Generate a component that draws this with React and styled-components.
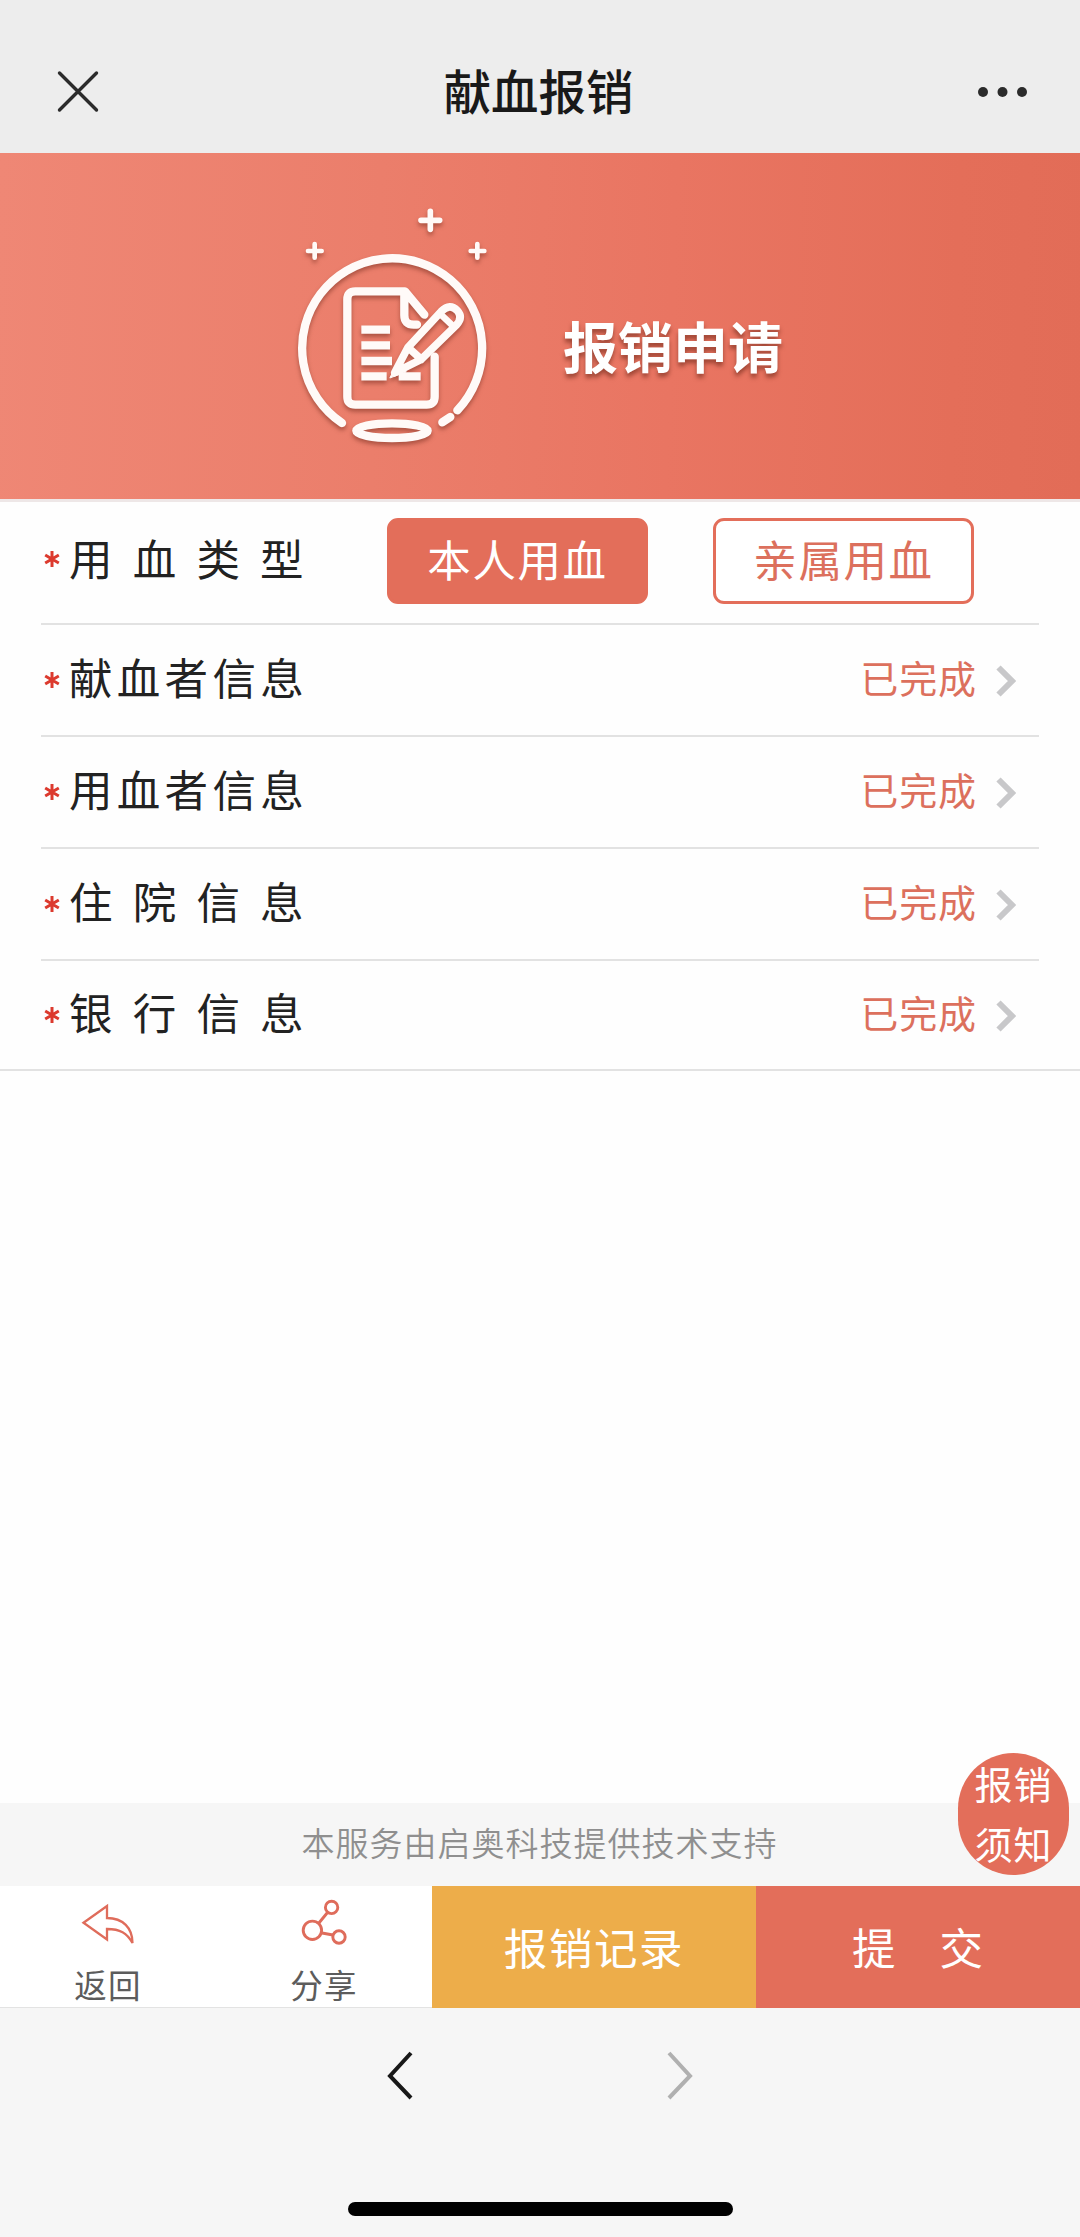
import React from 'react';
import styled, { createGlobalStyle } from 'styled-components';

const GlobalStyle = createGlobalStyle`
  * {
    box-sizing: border-box;
  }

  body {
    margin: 0;
    background: #fff;
    font-family: 'Noto Sans CJK SC', sans-serif;
    color: #222;
  }

  button {
    padding: 0;
    border: 0;
    background: none;
    font-family: inherit;
    white-space: nowrap;
  }
`;

const Page = styled.div`
  display: flex;
  flex-direction: column;
  width: 1080px;
  height: 2237px;
  background: #fefefe;
`;

const TitleBar = styled.header`
  display: flex;
  align-items: flex-end;
  justify-content: space-between;
  height: 153px;
  padding: 0 52px 36px;
  background: #ededed;
`;

const Title = styled.h1`
  margin: 0 3px 2px 0;
  font-size: 47.4px;
  font-weight: 500;
  line-height: 50px;
  color: #191919;
`;

const BarIcon = styled.svg`
  display: block;
  width: 52px;
  height: 50px;
`;

const Banner = styled.section`
  display: flex;
  align-items: flex-start;
  height: 349px;
  padding: 37px 0 0 270px;
  border-bottom: 3px solid #eee7e7;
  background: linear-gradient(92deg, #ef8775 0%, #eb7e6b 35%, #e97562 62%, #e46e59 88%, #e26c57 100%);
`;

const BannerIcon = styled.svg`
  width: 250px;
  height: 270px;
  filter: drop-shadow(0 3px 2px rgba(110, 40, 25, 0.5));
`;

const BannerText = styled.div`
  margin: 118px 0 0 43px;
  font-size: 55px;
  font-weight: 700;
  line-height: 72px;
  color: #fff;
  text-shadow: 0 4px 4px rgba(110, 40, 25, 0.6);
`;

const Form = styled.main`
  flex: 1;
`;

const List = styled.div`
  padding: 0 41px;
  border-bottom: 2px solid #e2e2e2;
`;

const Row = styled.div`
  display: flex;
  align-items: center;
  height: ${({ $height }) => $height || '112px'};
  padding-bottom: ${({ $lift }) => $lift || '1px'};
  border-bottom: 2px solid #e2e2e2;

  &:last-child {
    height: 108px;
    border-bottom: 0;
  }
`;

const Star = styled.svg`
  flex: none;
  width: 16px;
  height: 18px;
  margin: ${({ $top }) => $top || '1px'} 9px 0 3px;
`;

const Label = styled.div`
  width: 318px;
  margin-bottom: 6px;
  font-size: 43.5px;
  line-height: 60px;
  letter-spacing: ${({ $wide }) => ($wide ? '20.2px' : '4.3px')};
  white-space: nowrap;
`;

const Choice = styled.button`
  width: 261px;
  height: 86px;
  margin-right: 65px;
  padding-bottom: 5px;
  border: 3px solid #e36e5a;
  border-radius: 11px;
  background: ${({ $active }) => ($active ? '#e36e5a' : '#fff')};
  color: ${({ $active }) => ($active ? '#fff' : '#dc705d')};
  font-size: 43.5px;
  font-weight: 400;
  line-height: 75px;
  letter-spacing: 1.6px;
`;

const Status = styled.span`
  margin: 0 0 5px auto;
  font-size: 38px;
  font-weight: 400;
  line-height: 54px;
  letter-spacing: 0.9px;
  color: #dc705d;
`;

const Arrow = styled.svg`
  width: 20px;
  height: 32px;
  margin: 3px 23px 0 19px;
`;

const Support = styled.div`
  display: flex;
  align-items: center;
  justify-content: center;
  position: relative;
  height: 83px;
  padding: 0 1px 5px 0;
  background: #f6f6f6;
  font-size: 33px;
  font-weight: 350;
  letter-spacing: 1px;
  color: #8f8f8f;
`;

// Floating entry to the notice, hangs over the support line
const NoticeBadge = styled.button`
  position: absolute;
  right: 11px;
  bottom: 11px;
  width: 111px;
  height: 122px;
  padding-bottom: 5px;
  border-radius: 56px;
  background: #e36e5a;
  color: #fff;
  font-size: 38px;
  font-weight: 400;
  line-height: 60px;
  letter-spacing: 1px;
`;

const Toolbar = styled.footer`
  display: grid;
  grid-template-columns: 216px 216px 324px 324px;
  height: 122px;
`;

const Tool = styled.button`
  display: flex;
  flex-direction: column;
  align-items: center;
  padding-top: 12px;
  border-bottom: 2px solid #e3e3e3;
  background: #fff;
  font-size: 32.5px;
  font-weight: 400;
  line-height: 46px;
  letter-spacing: 1.2px;
  color: #5c5c5c;
`;

const ToolIcon = styled.svg`
  width: 56px;
  height: 50px;
  margin-bottom: 13px;
`;

const Action = styled.button`
  padding-bottom: 2px;
  background: ${({ $color }) => $color};
  color: #fff;
  font-size: 43.5px;
  font-weight: 400;
  letter-spacing: 1.6px;
`;

const SpacedAction = styled(Action)`
  letter-spacing: 44px;
  text-indent: 43px;
`;

const BrowserNav = styled.nav`
  display: flex;
  flex-direction: column;
  align-items: center;
  justify-content: space-between;
  height: 229px;
  padding: 42px 0 21px;
  background: #f6f6f6;
`;

const NavButtons = styled.div`
  display: flex;
  justify-content: space-between;
  width: 306px;
`;

const NavIcon = styled.svg`
  width: 26px;
  height: 50px;
`;

const HomeIndicator = styled.div`
  width: 385px;
  height: 14px;
  border-radius: 7px;
  background: #000;
`;

const rows = [
  { label: '献血者信息' },
  { label: '用血者信息' },
  { label: '住院信息', wide: true },
  { label: '银行信息', wide: true },
];

const RequiredStar = ({ top }) => (
  <Star $top={top} viewBox="0 0 16 18" stroke="#dc3a2e" strokeWidth="3">
    <path d="M8 1v16M1.2 5l13.6 8M14.8 5L1.2 13" />
  </Star>
);

const FormIcon = () => (
  <BannerIcon viewBox="0 0 750 810" fill="none" stroke="#fffaf8" strokeWidth="25" strokeLinecap="round" strokeLinejoin="round">
    <path d="M481 64v54M453 91h56" strokeWidth="17" />
    <path d="M134 162v41M114 183h41M622 162v41M602 183h41" strokeWidth="14" />
    <path d="M216 699A270 270 0 1 1 562 661" />
    <path d="M517 697l24 -16" />
    <ellipse cx="366" cy="722" rx="107" ry="22" />
    <path d="M494 500v120q0 24-24 24H256q-24 0-24-24V328q0-24 24-24H405L463 374M403 306v70q0 28 28 28h10" />
    <path d="M274 419h86M274 466h86M274 513h92M274 559h76M386 559h66" strokeLinecap="butt" />
    <path d="M414 472L514 364q26-26 48-2 18 20-2 42L454 508L374 548zM414 472L454 508" strokeWidth="23" />
    <path d="M509 370l38 36" strokeWidth="20" />
    <path d="M360 563l24-50 24 32z" fill="#fffaf8" strokeWidth="3" />
  </BannerIcon>
);

const App = () => (
  <>
    <GlobalStyle />
    <Page>
      <TitleBar>
        <BarIcon viewBox="0 0 52 50" stroke="#2b2b2b" strokeWidth="3.4" strokeLinecap="round">
          <path d="M7.5 6l37 37M44.5 6l-37 37" />
        </BarIcon>
        <Title>献血报销</Title>
        <BarIcon viewBox="0 0 52 50" fill="#2b2b2b">
          <circle cx="7" cy="25" r="5" />
          <circle cx="26.5" cy="25" r="5" />
          <circle cx="46" cy="25" r="5" />
        </BarIcon>
      </TitleBar>

      <Banner>
        <FormIcon />
        <BannerText>报销申请</BannerText>
      </Banner>

      <Form>
        <List>
          <Row $height="123px" $lift="3px">
            <RequiredStar top="-4px" />
            <Label $wide>用血类型</Label>
            <Choice $active>本人用血</Choice>
            <Choice>亲属用血</Choice>
          </Row>
          {rows.map(({ label, wide }) => (
            <Row key={label}>
              <RequiredStar />
              <Label $wide={wide}>{label}</Label>
              <Status>已完成</Status>
              <Arrow viewBox="0 0 20 32" fill="none" stroke="#c8c8ca" strokeWidth="6">
                <path d="M2.5 2.5L16 16L2.5 29.5" />
              </Arrow>
            </Row>
          ))}
        </List>
      </Form>

      <Support>
        本服务由启奥科技提供技术支持
        <NoticeBadge>
          报销
          <br />
          须知
        </NoticeBadge>
      </Support>

      <Toolbar>
        <Tool>
          <ToolIcon viewBox="0 0 56 50" fill="none" stroke="#df6c5b" strokeWidth="2.3">
            <path d="M3.5 24.7L27 8v12C43 20 52.5 30 52.5 45C47 35 40 31 27 31v10.5z" />
          </ToolIcon>
          返回
        </Tool>
        <Tool>
          <ToolIcon viewBox="0 0 56 50" fill="none" stroke="#df6c5b" strokeWidth="2.9">
            <circle cx="16.4" cy="32.3" r="9.2" />
            <circle cx="35.6" cy="9.4" r="6.2" />
            <circle cx="43" cy="39" r="6.2" />
            <path d="M22.5 25.5l9-11M26 35l11 2" />
          </ToolIcon>
          分享
        </Tool>
        <Action $color="#edad4a">报销记录</Action>
        <SpacedAction $color="#e36e5a">提交</SpacedAction>
      </Toolbar>

      <BrowserNav>
        <NavButtons>
          <NavIcon viewBox="0 0 26 50" fill="none" stroke="#181818" strokeWidth="4">
            <path d="M24 3L3 26L24 48" />
          </NavIcon>
          <NavIcon viewBox="0 0 26 50" fill="none" stroke="#b0b0b0" strokeWidth="4">
            <path d="M2 3L23 26L2 48" />
          </NavIcon>
        </NavButtons>
        <HomeIndicator />
      </BrowserNav>
    </Page>
  </>
);

export default App;
